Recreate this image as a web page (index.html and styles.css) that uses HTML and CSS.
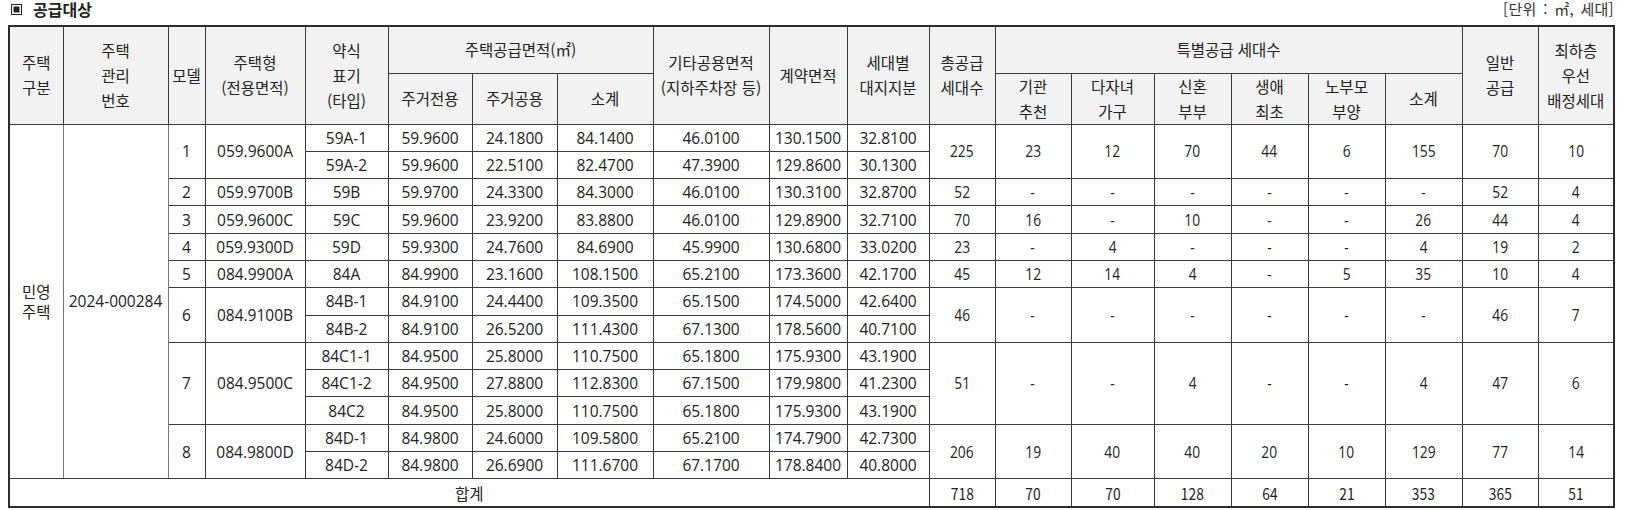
FILE: index.html
```html
<!DOCTYPE html>
<html lang="ko">
<head>
<meta charset="utf-8">
<title>공급대상</title>
<link rel="stylesheet" href="styles.css">
</head>
<body>
<div class="topbar">
  <div class="title"><span class="mark"></span>공급대상</div>
  <div class="unit">[단위 : ㎡, 세대]</div>
</div>
<table class="supply">
  <colgroup>
    <col style="width:54px"><col style="width:105px"><col style="width:37px"><col style="width:100px"><col style="width:83px">
    <col style="width:84px"><col style="width:85px"><col style="width:96px"><col style="width:116px"><col style="width:78px">
    <col style="width:82px"><col style="width:66px"><col style="width:76px"><col style="width:83px"><col style="width:77px">
    <col style="width:77px"><col style="width:77px"><col style="width:77px"><col style="width:76px"><col style="width:76px">
  </colgroup>
  <thead>
    <tr class="h1">
      <th rowspan="2">주택<br>구분</th>
      <th rowspan="2">주택<br>관리<br>번호</th>
      <th rowspan="2">모델</th>
      <th rowspan="2">주택형<br>(전용면적)</th>
      <th rowspan="2">약식<br>표기<br>(타입)</th>
      <th colspan="3">주택공급면적(㎡)</th>
      <th rowspan="2">기타공용면적<br>(지하주차장 등)</th>
      <th rowspan="2">계약면적</th>
      <th rowspan="2">세대별<br>대지지분</th>
      <th rowspan="2">총공급<br>세대수</th>
      <th colspan="6">특별공급 세대수</th>
      <th rowspan="2">일반<br>공급</th>
      <th rowspan="2">최하층<br>우선<br>배정세대</th>
    </tr>
    <tr class="h2">
      <th>주거전용</th>
      <th>주거공용</th>
      <th>소계</th>
      <th>기관<br>추천</th>
      <th>다자녀<br>가구</th>
      <th>신혼<br>부부</th>
      <th>생애<br>최초</th>
      <th>노부모<br>부양</th>
      <th>소계</th>
    </tr>
  </thead>
  <tbody>
    <tr>
      <td rowspan="13" class="soft">민영<br>주택</td>
      <td rowspan="13" class="soft">2024-000284</td>
      <td rowspan="2">1</td><td rowspan="2">059.9600A</td>
      <td>59A-1</td><td>59.9600</td><td>24.1800</td><td>84.1400</td><td>46.0100</td><td>130.1500</td><td>32.8100</td>
      <td rowspan="2" class="n"><span>225</span></td><td rowspan="2" class="n"><span>23</span></td><td rowspan="2" class="n"><span>12</span></td><td rowspan="2" class="n"><span>70</span></td><td rowspan="2" class="n"><span>44</span></td><td rowspan="2" class="n"><span>6</span></td><td rowspan="2" class="n"><span>155</span></td><td rowspan="2" class="n"><span>70</span></td><td rowspan="2" class="n"><span>10</span></td>
    </tr>
    <tr>
      <td>59A-2</td><td>59.9600</td><td>22.5100</td><td>82.4700</td><td>47.3900</td><td>129.8600</td><td>30.1300</td>
    </tr>
    <tr>
      <td>2</td><td>059.9700B</td><td>59B</td><td>59.9700</td><td>24.3300</td><td>84.3000</td><td>46.0100</td><td>130.3100</td><td>32.8700</td>
      <td class="n"><span>52</span></td><td class="n"><span>-</span></td><td class="n"><span>-</span></td><td class="n"><span>-</span></td><td class="n"><span>-</span></td><td class="n"><span>-</span></td><td class="n"><span>-</span></td><td class="n"><span>52</span></td><td class="n"><span>4</span></td>
    </tr>
    <tr>
      <td>3</td><td>059.9600C</td><td>59C</td><td>59.9600</td><td>23.9200</td><td>83.8800</td><td>46.0100</td><td>129.8900</td><td>32.7100</td>
      <td class="n"><span>70</span></td><td class="n"><span>16</span></td><td class="n"><span>-</span></td><td class="n"><span>10</span></td><td class="n"><span>-</span></td><td class="n"><span>-</span></td><td class="n"><span>26</span></td><td class="n"><span>44</span></td><td class="n"><span>4</span></td>
    </tr>
    <tr>
      <td>4</td><td>059.9300D</td><td>59D</td><td>59.9300</td><td>24.7600</td><td>84.6900</td><td>45.9900</td><td>130.6800</td><td>33.0200</td>
      <td class="n"><span>23</span></td><td class="n"><span>-</span></td><td class="n"><span>4</span></td><td class="n"><span>-</span></td><td class="n"><span>-</span></td><td class="n"><span>-</span></td><td class="n"><span>4</span></td><td class="n"><span>19</span></td><td class="n"><span>2</span></td>
    </tr>
    <tr>
      <td>5</td><td>084.9900A</td><td>84A</td><td>84.9900</td><td>23.1600</td><td>108.1500</td><td>65.2100</td><td>173.3600</td><td>42.1700</td>
      <td class="n"><span>45</span></td><td class="n"><span>12</span></td><td class="n"><span>14</span></td><td class="n"><span>4</span></td><td class="n"><span>-</span></td><td class="n"><span>5</span></td><td class="n"><span>35</span></td><td class="n"><span>10</span></td><td class="n"><span>4</span></td>
    </tr>
    <tr>
      <td rowspan="2">6</td><td rowspan="2">084.9100B</td>
      <td>84B-1</td><td>84.9100</td><td>24.4400</td><td>109.3500</td><td>65.1500</td><td>174.5000</td><td>42.6400</td>
      <td rowspan="2" class="n"><span>46</span></td><td rowspan="2" class="n"><span>-</span></td><td rowspan="2" class="n"><span>-</span></td><td rowspan="2" class="n"><span>-</span></td><td rowspan="2" class="n"><span>-</span></td><td rowspan="2" class="n"><span>-</span></td><td rowspan="2" class="n"><span>-</span></td><td rowspan="2" class="n"><span>46</span></td><td rowspan="2" class="n"><span>7</span></td>
    </tr>
    <tr>
      <td>84B-2</td><td>84.9100</td><td>26.5200</td><td>111.4300</td><td>67.1300</td><td>178.5600</td><td>40.7100</td>
    </tr>
    <tr>
      <td rowspan="3">7</td><td rowspan="3">084.9500C</td>
      <td>84C1-1</td><td>84.9500</td><td>25.8000</td><td>110.7500</td><td>65.1800</td><td>175.9300</td><td>43.1900</td>
      <td rowspan="3" class="n"><span>51</span></td><td rowspan="3" class="n"><span>-</span></td><td rowspan="3" class="n"><span>-</span></td><td rowspan="3" class="n"><span>4</span></td><td rowspan="3" class="n"><span>-</span></td><td rowspan="3" class="n"><span>-</span></td><td rowspan="3" class="n"><span>4</span></td><td rowspan="3" class="n"><span>47</span></td><td rowspan="3" class="n"><span>6</span></td>
    </tr>
    <tr>
      <td>84C1-2</td><td>84.9500</td><td>27.8800</td><td>112.8300</td><td>67.1500</td><td>179.9800</td><td>41.2300</td>
    </tr>
    <tr>
      <td>84C2</td><td>84.9500</td><td>25.8000</td><td>110.7500</td><td>65.1800</td><td>175.9300</td><td>43.1900</td>
    </tr>
    <tr>
      <td rowspan="2">8</td><td rowspan="2">084.9800D</td>
      <td>84D-1</td><td>84.9800</td><td>24.6000</td><td>109.5800</td><td>65.2100</td><td>174.7900</td><td>42.7300</td>
      <td rowspan="2" class="n"><span>206</span></td><td rowspan="2" class="n"><span>19</span></td><td rowspan="2" class="n"><span>40</span></td><td rowspan="2" class="n"><span>40</span></td><td rowspan="2" class="n"><span>20</span></td><td rowspan="2" class="n"><span>10</span></td><td rowspan="2" class="n"><span>129</span></td><td rowspan="2" class="n"><span>77</span></td><td rowspan="2" class="n"><span>14</span></td>
    </tr>
    <tr>
      <td>84D-2</td><td>84.9800</td><td>26.6900</td><td>111.6700</td><td>67.1700</td><td>178.8400</td><td>40.8000</td>
    </tr>
    <tr class="total">
      <td colspan="11">합계</td>
      <td class="n"><span>718</span></td><td class="n"><span>70</span></td><td class="n"><span>70</span></td><td class="n"><span>128</span></td><td class="n"><span>64</span></td><td class="n"><span>21</span></td><td class="n"><span>353</span></td><td class="n"><span>365</span></td><td class="n"><span>51</span></td>
    </tr>
  </tbody>
</table>
</body>
</html>
```

FILE: styles.css
```css
html, body {
  background: #ffffff;
}
body {
  margin: 0 8px;
  font-family: "Open Sans", "Noto Sans CJK KR", sans-serif;
  color: #222222;
}
.topbar {
  width: 1606px;
  height: 25px;
  display: flex;
  justify-content: space-between;
  align-items: flex-start;
}
.title {
  display: flex;
  align-items: center;
  gap: 11px;
  font-family: "Noto Sans CJK KR", sans-serif;
  font-weight: 700;
  font-size: 16px;
  line-height: 18px;
  padding-left: 3px;
}
.mark {
  width: 9px;
  height: 9px;
  border: 1.5px solid #222;
  box-shadow: inset 0 0 0 1.5px #fff;
  background: #222;
}
.unit {
  font-family: "Noto Sans CJK KR", sans-serif;
  font-size: 15px;
  line-height: 18px;
  letter-spacing: 0.3px;
  word-spacing: 2px;
  color: #333;
}
.supply {
  width: 1607px;
  table-layout: fixed;
  border-collapse: collapse;
  border: 2px solid #2b2b2b;
  font-size: 15.5px;
}
.supply th, .supply td {
  border: 1px solid #3a3a3a;
  padding: 0;
  text-align: center;
  vertical-align: middle;
  white-space: nowrap;
}
.supply th {
  background: #f2f2f2;
  font-weight: 400;
  font-family: "Noto Sans CJK KR", sans-serif;
  font-size: 15.5px;
  line-height: 25px;
}
.supply tr.h1 {
  height: 47px;
}
.supply tr.h2 {
  height: 51px;
}
.supply tbody tr {
  height: 27.3px;
}
.supply td {
  line-height: 20px;
}
.supply td.soft {
  border-left-color: #777;
  border-right-color: #777;
  font-family: "Noto Sans CJK KR", "Open Sans", sans-serif;
}
.supply td.soft + td.soft {
  font-family: "Open Sans", sans-serif;
}
.supply tr.total td {
  height: 26.7px;
  font-family: "Noto Sans CJK KR", sans-serif;
}
.supply td.n {
  font-family: "Open Sans", sans-serif;
  font-size: 16px;
}
.supply td.n span {
  display: inline-block;
  transform: scaleX(0.86);
}
```
